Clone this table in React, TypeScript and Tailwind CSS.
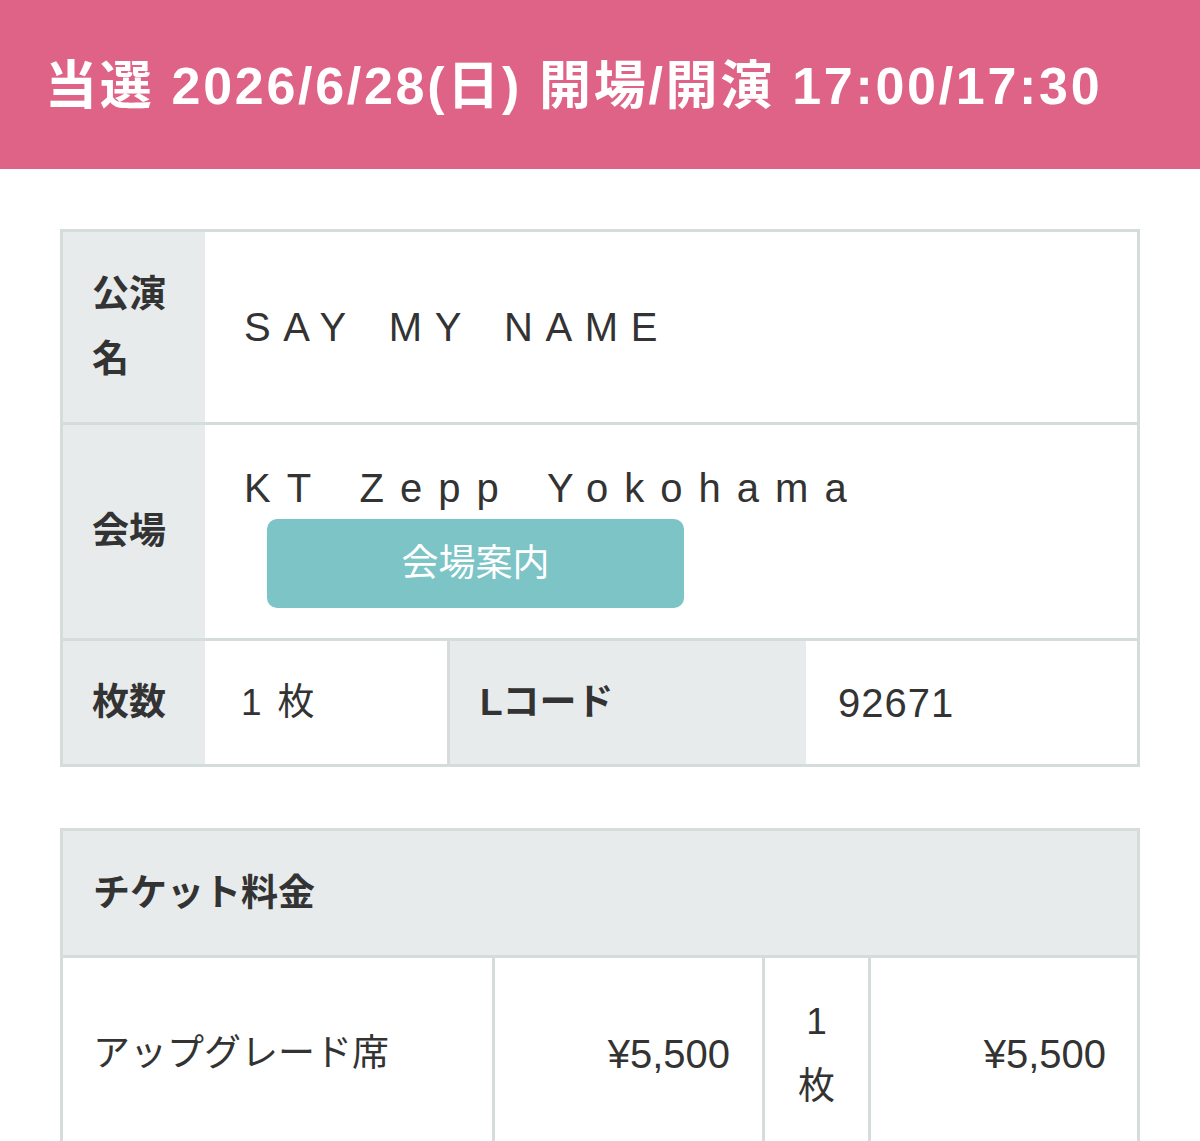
const jp = "font-['Liberation_Sans','Noto_Sans_CJK_JP',sans-serif]";

function Label({ children, className = "" }: { children: React.ReactNode; className?: string }) {
  return (
    <div className={`flex items-center bg-[#e7ebec] px-[29px] text-[37px] font-bold leading-[65px] text-[#333] ${className}`}>
      {children}
    </div>
  );
}

export default function App() {
  return (
    <div className={`min-h-[1141px] bg-white ${jp} text-[#333]`}>
      <header className="flex h-[169px] items-center bg-[#de6387] pl-[45px] pt-[2px]">
        <h1 className="text-[52px] font-bold tracking-[2.7px] text-white">
          当選 2026/6/28(日) 開場/開演 17:00/17:30
        </h1>
      </header>

      <div className="px-[60px] pt-[60px]">
        <div className="border-[3px] border-[#d4dcdc]">
          <div className="flex h-[190px]">
            <Label className="w-[142px]">公演名</Label>
            <div className="flex flex-1 items-center pl-[39px] text-[40px] tracking-[12.6px] [word-spacing:7px]">SAY MY NAME</div>
          </div>

          <div className="flex h-[216px] border-t-[3px] border-[#d4dcdc]">
            <Label className="w-[142px]">会場</Label>
            <div className="flex flex-1 flex-col pl-[39px] pt-[38px]">
              <div className="text-[40px] leading-[50px] tracking-[16px] [word-spacing:6px]">KT Zepp Yokohama</div>
              <button className="ml-[23px] mt-[6px] flex h-[89px] w-[417px] items-center justify-center rounded-[10px] bg-[#7dc4c7] text-[37px] text-white">
                会場案内
              </button>
            </div>
          </div>

          <div className="flex h-[126px] border-t-[3px] border-[#d4dcdc]">
            <Label className="w-[142px]">枚数</Label>
            <div className="flex w-[242px] items-center gap-[16px] pl-[36px] text-[37px]">
              <span>1</span>
              <span>枚</span>
            </div>
            <Label className="w-[359px] border-l-[3px] border-[#d4dcdc] !px-[30px]">Lコード</Label>
            <div className="flex flex-1 items-center pl-[32px] text-[40px] tracking-[1px]">92671</div>
          </div>
        </div>

        <div className="mt-[61px] border-x-[3px] border-t-[3px] border-[#d4dcdc]">
          <div className="flex h-[124px] items-center bg-[#e7ebec] px-[30px] pt-[2px] text-[37px] font-bold">チケット料金</div>
          <div className="flex h-[194px] border-t-[3px] border-[#d4dcdc] text-[37px]">
            <div className="flex w-[429px] items-center pl-[30px]">アップグレード席</div>
            <div className="flex w-[270px] items-center justify-end border-l-[3px] border-[#d4dcdc] pr-[32px] text-[40px]">¥5,500</div>
            <div className="flex w-[106px] items-center justify-center border-l-[3px] border-[#d4dcdc] text-center leading-[65px]">
              1<br />枚
            </div>
            <div className="flex flex-1 items-center justify-end border-l-[3px] border-[#d4dcdc] pr-[31px] text-[40px]">¥5,500</div>
          </div>
        </div>
      </div>
    </div>
  );
}
